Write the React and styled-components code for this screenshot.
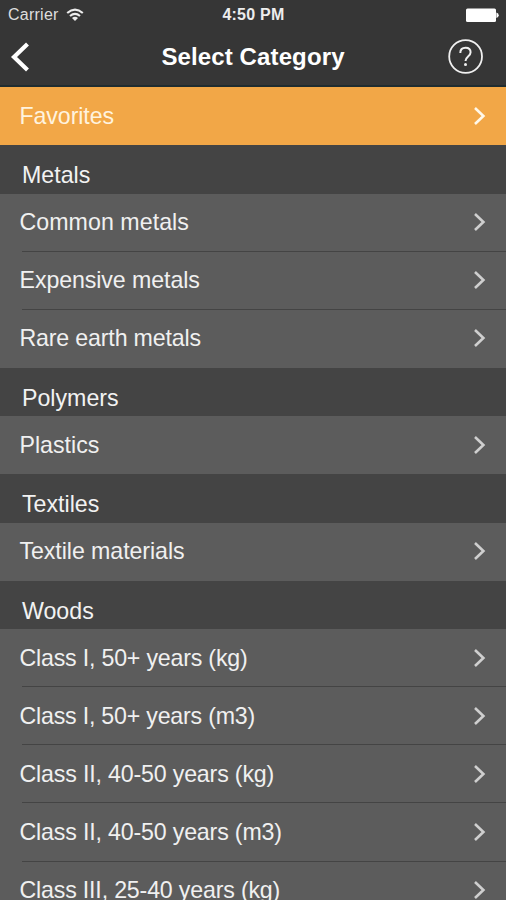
import React from "react";
import styled, { createGlobalStyle } from "styled-components";

const GlobalStyle = createGlobalStyle`
  *, *::before { box-sizing: border-box; }
  body { margin: 0; background: #5c5c5c; overflow: hidden; }
  #root { height: 100vh; }
`;

const Screen = styled.div`
  width: 506px;
  height: 900px;
  overflow: hidden;
  display: flex;
  flex-direction: column;
  background: #5c5c5c;
  color: #f2f2f2;
  font-family: "Liberation Sans", Arial, sans-serif;
`;

const TopBar = styled.header`
  flex: none;
  height: 87px;
  background: #363636;
  border-bottom: 2px solid #1f2c30;
`;

const StatusBar = styled.div`
  height: 28px;
  padding: 1px 7px 0 8px;
  display: grid;
  grid-template-columns: 1fr auto 1fr;
  align-items: center;
  font-size: 16px;
  line-height: 28px;
`;

const Carrier = styled.div`
  display: flex;
  align-items: center;
  gap: 7px;
  color: #dedede;
  letter-spacing: 0.25px;
`;

const Clock = styled.div`
  font-size: 16px;
  font-weight: 700;
  letter-spacing: 0.25px;
  color: #ededed;
`;

const BatteryIcon = styled.svg`
  justify-self: end;
`;

const NavBar = styled.div`
  height: 57px;
  padding: 0 22px 0 10px;
  display: grid;
  grid-template-columns: 38px 1fr 38px;
  align-items: center;
`;

const Title = styled.h1`
  margin: 0 0 0 12px;
  text-align: center;
  font-size: 24px;
  line-height: 28px;
  font-weight: 700;
  letter-spacing: 0.12px;
  color: #fff;
`;

const NavButton = styled.button`
  display: flex;
  justify-content: ${(p) => (p.$end ? "flex-end" : "flex-start")};
  padding: 0;
  border: 0;
  background: none;
  color: #fff;
`;

const SectionHeader = styled.h2`
  flex: none;
  margin: 0;
  height: 48.45px;
  padding: 17px 22px 0;
  background: #444;
  font-size: 23.2px;
  line-height: 26px;
  font-weight: 400;
`;

const Row = styled.div`
  flex: none;
  position: relative;
  height: 58.08px;
  padding: 0 20px 1px 19.5px;
  display: flex;
  align-items: center;
  justify-content: space-between;
  background: ${(p) => (p.$highlight ? "#f2a747" : "#5c5c5c")};
  color: ${(p) => (p.$highlight ? "#fff3df" : "#f0f0f0")};
  font-size: 23.2px;
  line-height: 26px;

  & + &::before {
    content: "";
    position: absolute;
    top: -1px;
    left: 22px;
    right: 0;
    height: 1px;
    background: #444;
  }
`;

const Label = styled.span`
  white-space: nowrap;
  letter-spacing: ${(p) => p.$tracking || 0}px;
`;

const sections = [
  {
    title: "Metals",
    rows: [["Common metals", 0.05], ["Expensive metals", -0.09], ["Rare earth metals", -0.17]],
  },
  { title: "Polymers", rows: [["Plastics"]] },
  { title: "Textiles", rows: [["Textile materials", -0.07]] },
  {
    title: "Woods",
    rows: [
      ["Class I, 50+ years (kg)", -0.2],
      ["Class I, 50+ years (m3)", -0.21],
      ["Class II, 40-50 years (kg)", -0.17],
      ["Class II, 40-50 years (m3)", -0.17],
      ["Class III, 25-40 years (kg)", -0.18],
    ],
  },
];

const Chevron = ({ color = "#cfcfcf" }) => (
  <svg width="13" height="20" viewBox="0 0 13 20" fill="none" stroke={color} strokeWidth="2.6">
    <path d="M2 2 L10.4 10 L2 18" />
  </svg>
);

const Wifi = () => (
  <svg width="18" height="14" viewBox="0 0 18 14" fill="none" stroke="#ededed" strokeWidth="2.1">
    <path d="M1.2 5 Q9 -1.8 16.8 5" />
    <path d="M4 8 Q9 3.8 14 8" />
    <path d="M6 10 Q9 7.7 12 10 L9 13 Z" fill="#ededed" stroke="none" />
  </svg>
);

const Battery = () => (
  <BatteryIcon width="34" height="15" viewBox="0 0 34 15" fill="#fff">
    <rect x="1" y="0.5" width="30" height="13.5" rx="1.5" />
    <path d="M31.4 4.5 Q33.7 5 33.7 7.2 Q33.7 9.5 31.4 10 Z" />
  </BatteryIcon>
);

export default function App() {
  return (
    <Screen>
      <GlobalStyle />
      <TopBar>
        <StatusBar>
          <Carrier>
            Carrier
            <Wifi />
          </Carrier>
          <Clock>4:50 PM</Clock>
          <Battery />
        </StatusBar>
        <NavBar>
          <NavButton aria-label="Back">
            <svg width="21" height="32" viewBox="0 0 21 32" fill="none" stroke="currentColor" strokeWidth="4.2">
              <path d="M17.5 3 L4 16 L17.5 29" />
            </svg>
          </NavButton>
          <Title>Select Category</Title>
          <NavButton $end aria-label="Help">
            <svg width="36" height="36" viewBox="0 0 36 36" fill="none" stroke="#f0f0f0" strokeWidth="1.8">
              <circle cx="17.6" cy="17.5" r="16.4" />
              <path d="M12.3 14 C12.3 10.3 14.6 8.7 17.6 8.7 C20.6 8.7 22.6 10.6 22.6 13.3 C22.6 17.5 17.5 17.6 17.5 22" strokeWidth="2" />
              <circle cx="17.5" cy="25.5" r="1.5" fill="#f0f0f0" stroke="none" />
            </svg>
          </NavButton>
        </NavBar>
      </TopBar>
      <Row $highlight>
        <Label $tracking={-0.1}>Favorites</Label>
        <Chevron color="#fff8ea" />
      </Row>
      {sections.map((section) => (
        <React.Fragment key={section.title}>
          <SectionHeader>{section.title}</SectionHeader>
          {section.rows.map(([label, tracking]) => (
            <Row key={label}>
              <Label $tracking={tracking}>{label}</Label>
              <Chevron />
            </Row>
          ))}
        </React.Fragment>
      ))}
    </Screen>
  );
}
